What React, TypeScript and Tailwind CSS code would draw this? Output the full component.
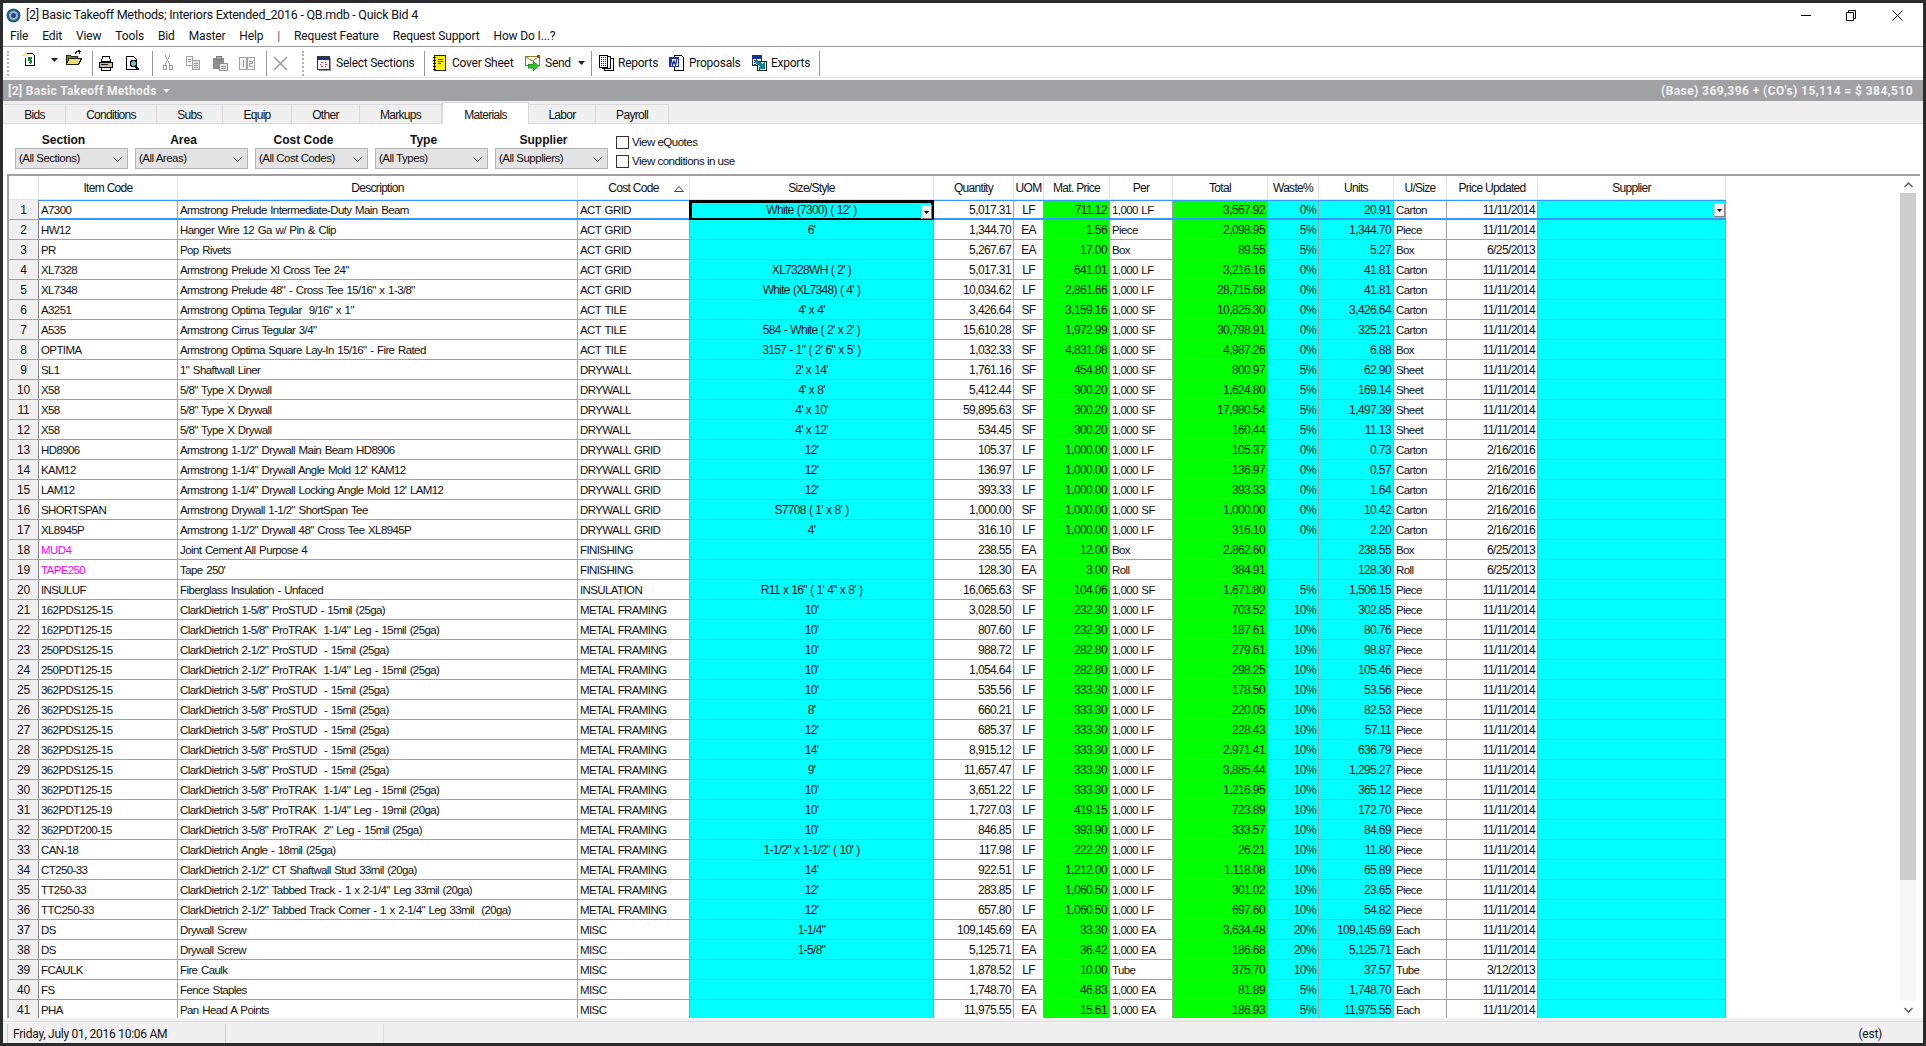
import React from "react";

type R = [string, string, string, string, string, string, string, string, string, string, string, string, string];
const D = "11/11/2014";
const A = "Armstrong";
const C = "ClarkDietrich";
const rows: R[] = [
  ["A7300", `${A} Prelude Intermediate-Duty Main Beam`, "ACT GRID", "White (7300) ( 12' )", "5,017.31", "LF", "711.12", "1,000 LF", "3,567.92", "0%", "20.91", "Carton", D],
  ["HW12", "Hanger Wire 12 Ga w/ Pin & Clip", "ACT GRID", "6'", "1,344.70", "EA", "1.56", "Piece", "2,098.95", "5%", "1,344.70", "Piece", D],
  ["PR", "Pop Rivets", "ACT GRID", "", "5,267.67", "EA", "17.00", "Box", "89.55", "5%", "5.27", "Box", "6/25/2013"],
  ["XL7328", `${A} Prelude Xl Cross Tee 24"`, "ACT GRID", "XL7328WH ( 2' )", "5,017.31", "LF", "641.01", "1,000 LF", "3,216.16", "0%", "41.81", "Carton", D],
  ["XL7348", `${A} Prelude 48" - Cross Tee 15/16" x 1-3/8"`, "ACT GRID", "White (XL7348) ( 4' )", "10,034.62", "LF", "2,861.66", "1,000 LF", "28,715.68", "0%", "41.81", "Carton", D],
  ["A3251", `${A} Optima Tegular  9/16" x 1"`, "ACT TILE", "4' x 4'", "3,426.64", "SF", "3,159.16", "1,000 SF", "10,825.30", "0%", "3,426.64", "Carton", D],
  ["A535", `${A} Cirrus Tegular 3/4"`, "ACT TILE", "584 - White ( 2' x 2' )", "15,610.28", "SF", "1,972.99", "1,000 SF", "30,798.91", "0%", "325.21", "Carton", D],
  ["OPTIMA", `${A} Optima Square Lay-In 15/16" - Fire Rated`, "ACT TILE", `3157 - 1" ( 2' 6" x 5' )`, "1,032.33", "SF", "4,831.08", "1,000 SF", "4,987.26", "0%", "6.88", "Box", D],
  ["SL1", `1" Shaftwall Liner`, "DRYWALL", "2' x 14'", "1,761.16", "SF", "454.80", "1,000 SF", "800.97", "5%", "62.90", "Sheet", D],
  ["X58", `5/8" Type X Drywall`, "DRYWALL", "4' x 8'", "5,412.44", "SF", "300.20", "1,000 SF", "1,624.80", "5%", "169.14", "Sheet", D],
  ["X58", `5/8" Type X Drywall`, "DRYWALL", "4' x 10'", "59,895.63", "SF", "300.20", "1,000 SF", "17,980.54", "5%", "1,497.39", "Sheet", D],
  ["X58", `5/8" Type X Drywall`, "DRYWALL", "4' x 12'", "534.45", "SF", "300.20", "1,000 SF", "160.44", "5%", "11.13", "Sheet", D],
  ["HD8906", `${A} 1-1/2" Drywall Main Beam HD8906`, "DRYWALL GRID", "12'", "105.37", "LF", "1,000.00", "1,000 LF", "105.37", "0%", "0.73", "Carton", "2/16/2016"],
  ["KAM12", `${A} 1-1/4" Drywall Angle Mold 12' KAM12`, "DRYWALL GRID", "12'", "136.97", "LF", "1,000.00", "1,000 LF", "136.97", "0%", "0.57", "Carton", "2/16/2016"],
  ["LAM12", `${A} 1-1/4" Drywall Locking Angle Mold 12' LAM12`, "DRYWALL GRID", "12'", "393.33", "LF", "1,000.00", "1,000 LF", "393.33", "0%", "1.64", "Carton", "2/16/2016"],
  ["SHORTSPAN", `${A} Drywall 1-1/2" ShortSpan Tee`, "DRYWALL GRID", "S7708 ( 1' x 8' )", "1,000.00", "SF", "1,000.00", "1,000 SF", "1,000.00", "0%", "10.42", "Carton", "2/16/2016"],
  ["XL8945P", `${A} 1-1/2" Drywall 48" Cross Tee XL8945P`, "DRYWALL GRID", "4'", "316.10", "LF", "1,000.00", "1,000 LF", "316.10", "0%", "2.20", "Carton", "2/16/2016"],
  ["MUD4", "Joint Cement All Purpose 4", "FINISHING", "", "238.55", "EA", "12.00", "Box", "2,862.60", "", "238.55", "Box", "6/25/2013"],
  ["TAPE250", "Tape 250'", "FINISHING", "", "128.30", "EA", "3.00", "Roll", "384.91", "", "128.30", "Roll", "6/25/2013"],
  ["INSULUF", "Fiberglass Insulation - Unfaced", "INSULATION", `R11 x 16" ( 1' 4" x 8' )`, "16,065.63", "SF", "104.06", "1,000 SF", "1,671.80", "5%", "1,506.15", "Piece", D],
  ["162PDS125-15", `${C} 1-5/8" ProSTUD - 15mil (25ga)`, "METAL FRAMING", "10'", "3,028.50", "LF", "232.30", "1,000 LF", "703.52", "10%", "302.85", "Piece", D],
  ["162PDT125-15", `${C} 1-5/8" ProTRAK  1-1/4" Leg - 15mil (25ga)`, "METAL FRAMING", "10'", "807.60", "LF", "232.30", "1,000 LF", "187.61", "10%", "80.76", "Piece", D],
  ["250PDS125-15", `${C} 2-1/2" ProSTUD  - 15mil (25ga)`, "METAL FRAMING", "10'", "988.72", "LF", "282.80", "1,000 LF", "279.61", "10%", "98.87", "Piece", D],
  ["250PDT125-15", `${C} 2-1/2" ProTRAK  1-1/4" Leg - 15mil (25ga)`, "METAL FRAMING", "10'", "1,054.64", "LF", "282.80", "1,000 LF", "298.25", "10%", "105.46", "Piece", D],
  ["362PDS125-15", `${C} 3-5/8" ProSTUD  - 15mil (25ga)`, "METAL FRAMING", "10'", "535.56", "LF", "333.30", "1,000 LF", "178.50", "10%", "53.56", "Piece", D],
  ["362PDS125-15", `${C} 3-5/8" ProSTUD  - 15mil (25ga)`, "METAL FRAMING", "8'", "660.21", "LF", "333.30", "1,000 LF", "220.05", "10%", "82.53", "Piece", D],
  ["362PDS125-15", `${C} 3-5/8" ProSTUD  - 15mil (25ga)`, "METAL FRAMING", "12'", "685.37", "LF", "333.30", "1,000 LF", "228.43", "10%", "57.11", "Piece", D],
  ["362PDS125-15", `${C} 3-5/8" ProSTUD  - 15mil (25ga)`, "METAL FRAMING", "14'", "8,915.12", "LF", "333.30", "1,000 LF", "2,971.41", "10%", "636.79", "Piece", D],
  ["362PDS125-15", `${C} 3-5/8" ProSTUD  - 15mil (25ga)`, "METAL FRAMING", "9'", "11,657.47", "LF", "333.30", "1,000 LF", "3,885.44", "10%", "1,295.27", "Piece", D],
  ["362PDT125-15", `${C} 3-5/8" ProTRAK  1-1/4" Leg - 15mil (25ga)`, "METAL FRAMING", "10'", "3,651.22", "LF", "333.30", "1,000 LF", "1,216.95", "10%", "365.12", "Piece", D],
  ["362PDT125-19", `${C} 3-5/8" ProTRAK  1-1/4" Leg - 19mil (20ga)`, "METAL FRAMING", "10'", "1,727.03", "LF", "419.15", "1,000 LF", "723.89", "10%", "172.70", "Piece", D],
  ["362PDT200-15", `${C} 3-5/8" ProTRAK  2" Leg - 15mil (25ga)`, "METAL FRAMING", "10'", "846.85", "LF", "393.90", "1,000 LF", "333.57", "10%", "84.69", "Piece", D],
  ["CAN-18", `${C} Angle - 18mil (25ga)`, "METAL FRAMING", `1-1/2" x 1-1/2" ( 10' )`, "117.98", "LF", "222.20", "1,000 LF", "26.21", "10%", "11.80", "Piece", D],
  ["CT250-33", `${C} 2-1/2" CT Shaftwall Stud 33mil (20ga)`, "METAL FRAMING", "14'", "922.51", "LF", "1,212.00", "1,000 LF", "1,118.08", "10%", "65.89", "Piece", D],
  ["TT250-33", `${C} 2-1/2" Tabbed Track - 1 x 2-1/4" Leg 33mil (20ga)`, "METAL FRAMING", "12'", "283.85", "LF", "1,060.50", "1,000 LF", "301.02", "10%", "23.65", "Piece", D],
  ["TTC250-33", `${C} 2-1/2" Tabbed Track Corner - 1 x 2-1/4" Leg 33mil  (20ga)`, "METAL FRAMING", "12'", "657.80", "LF", "1,060.50", "1,000 LF", "697.60", "10%", "54.82", "Piece", D],
  ["DS", "Drywall Screw", "MISC", "1-1/4\"", "109,145.69", "EA", "33.30", "1,000 EA", "3,634.48", "20%", "109,145.69", "Each", D],
  ["DS", "Drywall Screw", "MISC", "1-5/8\"", "5,125.71", "EA", "36.42", "1,000 EA", "186.68", "20%", "5,125.71", "Each", D],
  ["FCAULK", "Fire Caulk", "MISC", "", "1,878.52", "LF", "10.00", "Tube", "375.70", "10%", "37.57", "Tube", "3/12/2013"],
  ["FS", "Fence Staples", "MISC", "", "1,748.70", "EA", "46.83", "1,000 EA", "81.89", "5%", "1,748.70", "Each", D],
  ["PHA", "Pan Head A Points", "MISC", "", "11,975.55", "EA", "15.61", "1,000 EA", "186.93", "5%", "11,975.55", "Each", D],
];

const cols = "grid grid-cols-[30px_139px_400px_112px_244px_80px_30px_66px_63px_95px_51px_75px_53px_91px_188px]";
const base = "h-full overflow-hidden whitespace-pre border-r border-b border-[#a0a0a0] leading-[20px] text-[#111]";
const left = `${base} pl-[2px] text-left text-[11.500px] tracking-[-0.6px] [word-spacing:1px]`;
const right = `${base} pr-[2px] text-right text-[12px] tracking-[-0.6px]`;
const center = `${base} text-center text-[12px] tracking-[-0.7px] [word-spacing:0.5px]`;

const Ic = ({ w = 16, h = 16, vb = "0 0 16 16", children }: { w?: number; h?: number; vb?: string; children: React.ReactNode }) => (
  <svg width={w} height={h} viewBox={vb} className="shrink-0" shapeRendering="crispEdges">{children}</svg>
);

const NewDoc = () => (
  <Ic w={15} h={15}>
    <path d="M3.5 2.5h7l3 3v10h-10z" fill="#fff" stroke="#000" />
    <path d="M0 1l3 2 1-3 1 3 3 0-3 2-1 3-1-3-3 0 2-2z" fill="#ffe95c" />
    <path d="M11 7.5H7.5v2.5H10.5v2.5H7M9 6v8" fill="none" stroke="#0a8a2a" strokeWidth="1.3" />
  </Ic>
);
const Folder = () => (
  <Ic>
    <path d="M0.5 5.5h4l1 1h6v8h-11z" fill="#8a7a20" stroke="#222" />
    <path d="M3 8.5h12.5l-3 6h-12z" fill="#f1dc6a" stroke="#222" />
    <path d="M9 4c1-3 3-3 5-2.500M12.500 0l2 1.500-1.500 2" fill="none" stroke="#222" />
  </Ic>
);
const Printer = () => (
  <Ic>
    <path d="M4.500 1.500h7l1 5h-9z" fill="#fff" stroke="#000" />
    <path d="M1.500 7.500h13v5h-13z" fill="#bdbdbd" stroke="#000" />
    <path d="M3.500 12.500h9v2.500h-9z" fill="#fff" stroke="#000" />
    <path d="M3 9h7v1H3z" fill="#222" />
    <path d="M11 9h2v1h-2z" fill="#e8d44a" />
  </Ic>
);
const Preview = () => (
  <Ic>
    <path d="M1.500 1.500h7l2.500 2.500v10.500h-9.500z" fill="#fff" stroke="#000" />
    <path d="M6 5h4v1h1v4h-1v1H6v-1H5V6h1z" fill="#55c4cc" stroke="#000" />
    <path d="M10 11l4 4" stroke="#000" strokeWidth="2" fill="none" />
  </Ic>
);
const Cut = () => (
  <Ic w={11} h={16} vb="0 0 11 16">
    <path d="M3 0l5 10M8 0L3 10" stroke="#9a9a9a" fill="none" />
    <path d="M1 10.500h3v4H1zM7 10.500h3v4H7z" fill="#fff" stroke="#9a9a9a" />
  </Ic>
);
const Copy = () => (
  <Ic>
    <path d="M1.500 1.500h6v9h-6z" fill="#fff" stroke="#a0a0a0" />
    <path d="M7.500 5.500h7v9h-7z" fill="#e0e0e0" stroke="#a0a0a0" />
    <path d="M3 4h3M3 6h3M9 8h4M9 10h4M9 12h4" stroke="#a0a0a0" />
  </Ic>
);
const Paste = () => (
  <Ic>
    <path d="M1 3h11v11H1z" fill="#8e8e8e" />
    <path d="M4 1h5v3H4z" fill="#a8a8a8" stroke="#7a7a7a" />
    <path d="M7.500 8.500h8v7h-8z" fill="#e8e8e8" stroke="#8e8e8e" />
    <path d="M9 11h5M9 13h5" stroke="#8e8e8e" />
  </Ic>
);
const PasteS = () => (
  <Ic>
    <path d="M0.500 2.500h7v12h-7zM8.500 2.500h7v12h-7z" fill="#f4f4f4" stroke="#a0a0a0" />
    <path d="M3.500 5.500h1v6M10 6h3.500v2.500h-3v3H14" fill="none" stroke="#9a9a9a" />
  </Ic>
);
const XIcon = () => (
  <svg width="15" height="15" viewBox="0 0 15 15" className="shrink-0"><path d="M1 1l13 13M14 1L1 14" stroke="#9a9a9a" strokeWidth="1.5" fill="none" /></svg>
);
const Sections = () => (
  <Ic w={14} h={16} vb="0 0 14 16">
    <path d="M0.500 1.500h12v13h-12z" fill="#fff" stroke="#333" />
    <path d="M1 2h11v2.500H1z" fill="#1d2f87" />
    <path d="M13 3h1v13H2v-1h11z" fill="#9a9a9a" />
    <path d="M4 7h2M8 7h1M3 9h1M8 9h2M4 11h2M8 11h1" stroke="#e0303a" />
  </Ic>
);
const Cover = () => (
  <Ic w={13} h={16} vb="0 0 13 16">
    <path d="M1.500 0.500h11v15h-11z" fill="#fff200" stroke="#222" />
    <path d="M0 2h3M0 5h3M0 8h3M0 11h3M0 14h3" stroke="#111" />
    <path d="M5 4h5M5 6h5M5 8h3" stroke="#555" />
  </Ic>
);
const Send = () => (
  <Ic>
    <path d="M0.500 1.500h14v9h-14z" fill="#fff" stroke="#8a7a2a" />
    <path d="M1 2l6 4 7-4" stroke="#b0a060" fill="none" />
    <path d="M12 0h3v3h-3z" fill="#e02020" />
    <path d="M3 9h5V6l6 5-6 5v-3H3z" fill="#2ec02e" stroke="#0a7a0a" strokeWidth="0.5" />
  </Ic>
);
const Reports = () => (
  <Ic w={15} h={16} vb="0 0 15 16">
    <path d="M5.500 3.500h9v12h-9z" fill="#fff" stroke="#000" />
    <path d="M3.500 1.500h8v12h-8z" fill="#fff" stroke="#000" />
    <path d="M0.500 0.500h8v12h-8z" fill="#fff" stroke="#000" />
    <path d="M2 2.500h5M2 4.500h5M2 6.500h5M2 8.500h5M2 10.500h5" stroke="#222" strokeDasharray="1 1" />
  </Ic>
);
const Proposals = () => (
  <Ic>
    <path d="M5.500 0.500h7l2 2v13h-9z" fill="#fff" stroke="#000" />
    <path d="M0 2h10v10H0z" fill="#1b2fa8" />
    <path d="M1.500 3.500h7v7h-7z" fill="#fff" />
    <path d="M2 4l1.500 6 1.500-4 1.500 4L8 4" stroke="#1b2fa8" strokeWidth="1.300" fill="none" shapeRendering="auto" />
  </Ic>
);
const Exports = () => (
  <Ic w={15} h={16} vb="0 0 15 16">
    <path d="M0.500 0.500h9v10h-9z" fill="#fff" stroke="#1a2a8a" />
    <path d="M1 1h8v2.500H1z" fill="#1d2f9a" />
    <path d="M5.500 6.500h9v9h-9z" fill="#e8e8e8" stroke="#222" />
    <path d="M2 5h2M2 7h2M2 9h2M7 9h1M7 12h1M7 14h1" stroke="#444" />
    <path d="M4 4l7 5 1.500-2v7h-6l2-2-6-5z" fill="#14808a" />
  </Ic>
);
const Caret = () => <svg width="7" height="4" viewBox="0 0 7 4" className="shrink-0"><path d="M0 0h7L3.500 4z" fill="#222" /></svg>;
const Sep = () => <div className="h-[25px] w-px shrink-0 bg-[#9a9a9a]" />;
const Grip = () => <div className="h-[25px] w-[2px] shrink-0 border-l-2 border-dotted border-[#b0b0b0]" />;

const tabs: [string, string][] = [
  ["Bids", "w-[62px]"], ["Conditions", "w-[91px]"], ["Subs", "w-[66px]"], ["Equip", "w-[69px]"], ["Other", "w-[68px]"], ["Markups", "w-[82px]"], ["Materials", "w-[87px]"], ["Labor", "w-[67px]"], ["Payroll", "w-[73px]"],
];
const combos: [string, string][] = [["Section", "(All Sections)"], ["Area", "(All Areas)"], ["Cost Code", "(All Cost Codes)"], ["Type", "(All Types)"], ["Supplier", "(All Suppliers)"]];
const headers = ["", "Item Code", "Description", "Cost Code", "Size/Style", "Quantity", "UOM", "Mat. Price", "Per", "Total", "Waste%", "Units", "U/Size", "Price Updated", "Supplier"];

const Drop = ({ cls }: { cls: string }) => (
  <div className={`absolute flex h-[14px] w-[11px] items-center justify-center border border-[#c8c8c8] border-b-[#808080] border-r-[#808080] bg-[#f0f0f0] ${cls}`}>
    <svg width="5" height="3" viewBox="0 0 5 3"><path d="M0 0h5L2.500 3z" fill="#000" /></svg>
  </div>
);

export default function App() {
  return (
    <div className="flex h-[1046px] w-full flex-col overflow-hidden border-x-[3px] border-y-[3px] border-[#2b2b2b] bg-white font-['Roboto',sans-serif] text-[12px] text-[#111]">
      {/* Title bar */}
      <div className="flex h-[24px] shrink-0 items-center bg-white">
        <svg width="15" height="15" viewBox="0 0 15 15" className="ml-[3px] shrink-0">
          <circle cx="7.500" cy="7.500" r="7" fill="#1f5d8a" />
          <circle cx="7.500" cy="7.500" r="4.500" fill="#9fb6c6" />
          <circle cx="7.500" cy="7.500" r="2.500" fill="#234a78" />
        </svg>
        <span className="ml-[5px] text-[12.500px] leading-none tracking-[-0.27px]">[2] Basic Takeoff Methods; Interiors Extended_2016 - QB.mdb - Quick Bid 4</span>
        <div className="ml-auto flex items-center">
          <div className="h-px w-[10px] bg-black" />
          <svg width="11" height="11" viewBox="0 0 11 11" className="ml-[35px]"><path d="M2.500 2.500V0.500h7v8H7.500M0.500 2.500h7v8h-7z" fill="#fff" stroke="#000" /></svg>
          <svg width="11" height="11" viewBox="0 0 11 11" className="ml-[35px] mr-[20px]"><path d="M0.500 0.500l10 10M10.500 0.500l-10 10" stroke="#000" fill="none" /></svg>
        </div>
      </div>
      {/* Menu */}
      <div className="flex h-[19px] shrink-0 items-center gap-[14px] pb-[2px] pl-[7px] text-[12px] leading-none tracking-[-0.15px]">
        {["File", "Edit", "View", "Tools", "Bid", "Master", "Help"].map((m) => <span key={m}>{m}</span>)}
        <span className="text-[#555]">|</span>
        {["Request Feature", "Request Support", "How Do I...?"].map((m) => <span key={m}>{m}</span>)}
      </div>
      {/* Toolbar */}
      <div className="flex h-[32px] shrink-0 items-center whitespace-nowrap border-b border-t border-b-[#e0e0e0] border-t-[#a0a0a0] pl-[4px] pt-[2px] text-[12px] tracking-[-0.25px]">
        <Grip />
        <div className="mb-[10px] ml-[13px]"><NewDoc /></div>
        <div className="mb-[6px] ml-[14px]"><Caret /></div>
        <div className="mb-[10px] ml-[8px]"><Folder /></div>
        <div className="ml-[10px]"><Sep /></div>
        <div className="ml-[5px]"><Printer /></div>
        <div className="ml-[11px]"><Preview /></div>
        <div className="ml-[11px]"><Sep /></div>
        <div className="ml-[9px]"><Cut /></div>
        <div className="ml-[12px]"><Copy /></div>
        <div className="ml-[11px]"><Paste /></div>
        <div className="ml-[11px]"><PasteS /></div>
        <div className="ml-[11px]"><Sep /></div>
        <div className="ml-[6px]"><XIcon /></div>
        <div className="ml-[14px]"><Grip /></div>
        <div className="ml-[13px]"><Sections /></div>
        <span className="ml-[5px] w-[78px]">Select Sections</span>
        <div className="ml-[10px]"><Sep /></div>
        <div className="ml-[8px]"><Cover /></div>
        <span className="ml-[6px] w-[62px]">Cover Sheet</span>
        <div className="ml-[11px]"><Send /></div>
        <span className="ml-[4px] w-[26px]">Send</span>
        <div className="ml-[7px]"><Caret /></div>
        <div className="ml-[6px]"><Sep /></div>
        <div className="ml-[7px]"><Reports /></div>
        <span className="ml-[4px] w-[40px]">Reports</span>
        <div className="ml-[11px]"><Proposals /></div>
        <span className="ml-[4px] w-[50px]">Proposals</span>
        <div className="ml-[13px]"><Exports /></div>
        <span className="ml-[4px] w-[38px]">Exports</span>
        <div className="ml-[10px]"><Sep /></div>
      </div>
      <div className="h-[2px] shrink-0 bg-white" />
      {/* Band */}
      <div className="flex h-[21px] shrink-0 items-center justify-between bg-[#a0a1a3] pl-[5px] pr-[10px] text-[12px] font-bold tracking-[0.33px] text-[#f2f2f2]">
        <div className="flex items-center gap-[6px]">
          <span>[2] Basic Takeoff Methods</span>
          <svg width="7" height="4" viewBox="0 0 7 4"><path d="M0 0h7L3.500 4z" fill="#f2f2f2" /></svg>
        </div>
        <span className="tracking-[0.42px]">(Base) 369,396 + (CO's) 15,114 = $ 384,510</span>
      </div>
      {/* Tabs */}
      <div className="flex h-[23px] shrink-0 items-end border-b border-[#d9d9d9] bg-[#f0f0f0] pl-px font-['Liberation_Sans',sans-serif] text-[12px] tracking-[-0.7px]">
        {tabs.map(([t, w]) =>
          t === "Materials" ? (
            <div key={t} className={`${w} -mb-px flex h-[22px] items-center justify-center border border-b-0 border-[#d9d9d9] bg-white pt-[2px]`}>{t}</div>
          ) : (
            <div key={t} className={`${w} flex h-[19px] items-center justify-center border-r border-t border-[#d9d9d9] bg-[#f0f0f0] pt-[2px]`}>{t}</div>
          )
        )}
      </div>
      {/* Filters */}
      <div className="flex h-[50px] shrink-0 gap-[7px] pl-[12px] pt-[9px] font-['Liberation_Sans',sans-serif] text-[11.500px] tracking-[-0.5px]">
        {combos.map(([l, v]) => (
          <div key={l} className="flex w-[113px] flex-col">
            <div className="h-[15px] w-[97px] text-center text-[12px] font-bold leading-[14px] tracking-normal">{l}</div>
            <div className="flex h-[21px] items-center justify-between border border-[#b4b4b4] bg-[#e3e3e3] pl-[3px] pr-[5px] pt-px">
              <span>{v}</span>
              <svg width="9" height="5" viewBox="0 0 9 5"><path d="M0.500 0.500l4 4 4-4" stroke="#555" fill="none" /></svg>
            </div>
          </div>
        ))}
        <div className="ml-px flex flex-col gap-[6px] pt-[3px]">
          {["View eQuotes", "View conditions in use"].map((t) => (
            <div key={t} className="flex h-[13px] items-center gap-[3px]">
              <div className="h-[13px] w-[13px] border border-[#333] bg-white" />
              <span>{t}</span>
            </div>
          ))}
        </div>
      </div>
      {/* Grid */}
      <div className="ml-[4px] mr-[3px] flex min-h-0 flex-1 overflow-hidden border-l-2 border-t-2 border-[#a0a0a0] font-['Liberation_Sans',sans-serif] text-[12px] tracking-[-0.7px]">
        <div className="min-w-0 flex-1 overflow-hidden">
          <div className={`${cols} h-[24px] w-[1717px]`}>
            {headers.map((h, i) => (
              <div key={i} className="relative flex h-full items-center justify-center border-b border-r border-[#dfe5ea] bg-white pt-px">
                {h}
                {h === "Cost Code" && (
                  <svg width="10" height="6" viewBox="0 0 10 6" className="absolute right-[5px] top-[10px]"><path d="M0.500 5.500L5 0.500l4.500 5z" fill="#fff" stroke="#444" /></svg>
                )}
              </div>
            ))}
          </div>
          {rows.map((r, i) => {
            const sel = i === 0;
            const magenta = i === 17 || i === 18;
            return (
              <div key={i} className={`${cols} relative h-5 w-[1717px]`}>
                <div className="flex h-full items-center justify-center border-b border-r border-b-[#a0a0a0] border-r-[#808080] bg-[#f0f0f0] pt-px text-[12px] tracking-[-0.2px]">{i + 1}</div>
                <div className={`${left} ${magenta ? "!text-[#ff00ff]" : ""}`}>{r[0]}</div>
                <div className={left}>{r[1]}</div>
                <div className={left}>{r[2]}</div>
                <div className={`${center} bg-[#00ffff]`}>{r[3]}</div>
                <div className={right}>{r[4]}</div>
                <div className={center}>{r[5]}</div>
                <div className={`${right} bg-[#00ff00]`}>{r[6]}</div>
                <div className={left}>{r[7]}</div>
                <div className={`${right} bg-[#00ff00]`}>{r[8]}</div>
                <div className={`${right} bg-[#00ffff]`}>{r[9]}</div>
                <div className={`${right} bg-[#00ffff]`}>{r[10]}</div>
                <div className={left}>{r[11]}</div>
                <div className={right}>{r[12]}</div>
                <div className={`${left} bg-[#00ffff]`} />
                {sel && (
                  <>
                    <div className="pointer-events-none absolute left-[30px] right-0 top-0 h-px bg-[#3399ff]" />
                    <div className="pointer-events-none absolute bottom-0 left-[30px] right-0 h-[2px] bg-[#3399ff]" />
                    <div className="pointer-events-none absolute left-[680px] top-0 h-[21px] w-[245px] border-[3px] border-black" />
                    <Drop cls="left-[912px] top-[5px]" />
                    <Drop cls="left-[1705px] top-[3px]" />
                  </>
                )}
              </div>
            );
          })}
        </div>
        {/* Scrollbar */}
        <div className="mr-[4px] flex w-[16px] shrink-0 flex-col bg-[#f7f7f7]">
          <div className="flex h-[17px] items-center justify-center bg-white">
            <svg width="9" height="6" viewBox="0 0 9 6"><path d="M0.500 5L4.500 1l4 4" stroke="#606060" strokeWidth="1.500" fill="none" /></svg>
          </div>
          <div className="h-[687px] bg-[#cdcdcd]" />
          <div className="flex-1" />
          <div className="flex h-[17px] items-center justify-center bg-white">
            <svg width="9" height="6" viewBox="0 0 9 6"><path d="M0.500 1l4 4 4-4" stroke="#606060" strokeWidth="1.500" fill="none" /></svg>
          </div>
        </div>
      </div>
      {/* Spacer + status */}
      <div className="h-[3px] shrink-0 bg-[#f0f0f0]" />
      <div className="flex h-[22px] shrink-0 items-center border-t border-[#dcdcdc] bg-[#f0f0f0] pt-[2px] text-[12px] tracking-[-0.25px]">
        <div className="ml-[4px] flex h-full w-[219px] items-center border-l border-r border-[#c8c8c8] pl-[5px]">Friday, July 01, 2016 10:06 AM</div>
        <div className="h-full w-[158px] border-r border-[#dcdcdc]" />
        <span className="ml-auto mr-[41px]">(est)</span>
      </div>
    </div>
  );
}
